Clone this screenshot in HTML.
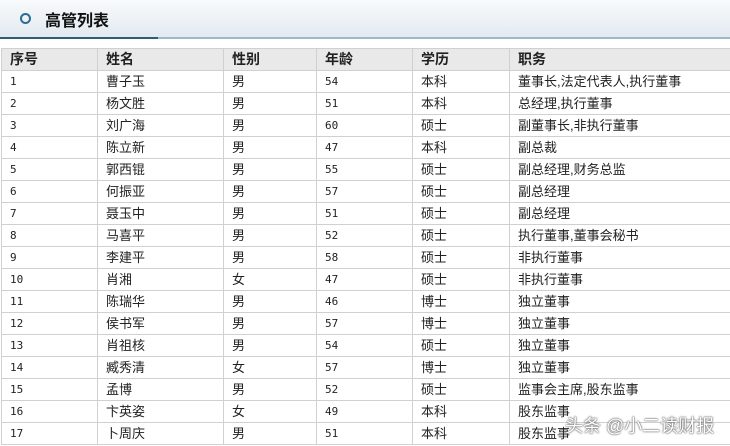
<!DOCTYPE html><html><head><meta charset="utf-8"><style>
body{margin:0;width:730px;height:446px;overflow:hidden;background:#fff;font-family:"Liberation Sans","Noto Sans CJK SC",sans-serif;position:relative}
.hd{position:absolute;left:0;top:0;width:730px;height:37px;background:linear-gradient(#f8fafc,#e2eaf0)}
.hd .c{position:absolute;left:20px;top:13px;width:7px;height:7px;border:2px solid #2b6d93;border-radius:50%}
.hd .t{position:absolute;left:45px;top:7px;font-size:16px;font-weight:bold;color:#111}
.l1{position:absolute;left:0;top:37px;width:158px;height:2px;background:#2e5e72}
.l2{position:absolute;left:158px;top:37px;width:572px;height:2px;background:#9dbac6}
table{position:absolute;left:1px;top:48px;border-collapse:collapse;width:735px}
td{border:1px solid #d0d0d0;height:21px;padding:0 0 0 8px;font-size:13px;color:#222;white-space:nowrap;line-height:21px}
tr.h td{background:#e9e9e9;font-weight:bold;font-size:14px;color:#222}
td.n{font-family:"DejaVu Sans Mono",monospace;font-size:11px}
.wm{position:absolute;left:565px;top:412px;font-size:18px;color:#fff;text-shadow:0 0 2px #555,0 0 1px #333}
</style></head><body>
<div class="hd"><div class="c"></div><div class="t">高管列表</div></div>
<div class="l1"></div><div class="l2"></div>
<table>
<colgroup><col style="width:96px"><col style="width:126px"><col style="width:93px"><col style="width:96px"><col style="width:97px"><col></colgroup>
<tr class="h"><td>序号</td><td>姓名</td><td>性别</td><td>年龄</td><td>学历</td><td>职务</td></tr>
<tr><td class="n">1</td><td>曹子玉</td><td>男</td><td class="n">54</td><td>本科</td><td>董事长,法定代表人,执行董事</td></tr>
<tr><td class="n">2</td><td>杨文胜</td><td>男</td><td class="n">51</td><td>本科</td><td>总经理,执行董事</td></tr>
<tr><td class="n">3</td><td>刘广海</td><td>男</td><td class="n">60</td><td>硕士</td><td>副董事长,非执行董事</td></tr>
<tr><td class="n">4</td><td>陈立新</td><td>男</td><td class="n">47</td><td>本科</td><td>副总裁</td></tr>
<tr><td class="n">5</td><td>郭西锟</td><td>男</td><td class="n">55</td><td>硕士</td><td>副总经理,财务总监</td></tr>
<tr><td class="n">6</td><td>何振亚</td><td>男</td><td class="n">57</td><td>硕士</td><td>副总经理</td></tr>
<tr><td class="n">7</td><td>聂玉中</td><td>男</td><td class="n">51</td><td>硕士</td><td>副总经理</td></tr>
<tr><td class="n">8</td><td>马喜平</td><td>男</td><td class="n">52</td><td>硕士</td><td>执行董事,董事会秘书</td></tr>
<tr><td class="n">9</td><td>李建平</td><td>男</td><td class="n">58</td><td>硕士</td><td>非执行董事</td></tr>
<tr><td class="n">10</td><td>肖湘</td><td>女</td><td class="n">47</td><td>硕士</td><td>非执行董事</td></tr>
<tr><td class="n">11</td><td>陈瑞华</td><td>男</td><td class="n">46</td><td>博士</td><td>独立董事</td></tr>
<tr><td class="n">12</td><td>侯书军</td><td>男</td><td class="n">57</td><td>博士</td><td>独立董事</td></tr>
<tr><td class="n">13</td><td>肖祖核</td><td>男</td><td class="n">54</td><td>硕士</td><td>独立董事</td></tr>
<tr><td class="n">14</td><td>臧秀清</td><td>女</td><td class="n">57</td><td>博士</td><td>独立董事</td></tr>
<tr><td class="n">15</td><td>孟博</td><td>男</td><td class="n">52</td><td>硕士</td><td>监事会主席,股东监事</td></tr>
<tr><td class="n">16</td><td>卞英姿</td><td>女</td><td class="n">49</td><td>本科</td><td>股东监事</td></tr>
<tr><td class="n">17</td><td>卜周庆</td><td>男</td><td class="n">51</td><td>本科</td><td>股东监事</td></tr>
</table>
<div class="wm">头条 @小二读财报</div>
</body></html>
